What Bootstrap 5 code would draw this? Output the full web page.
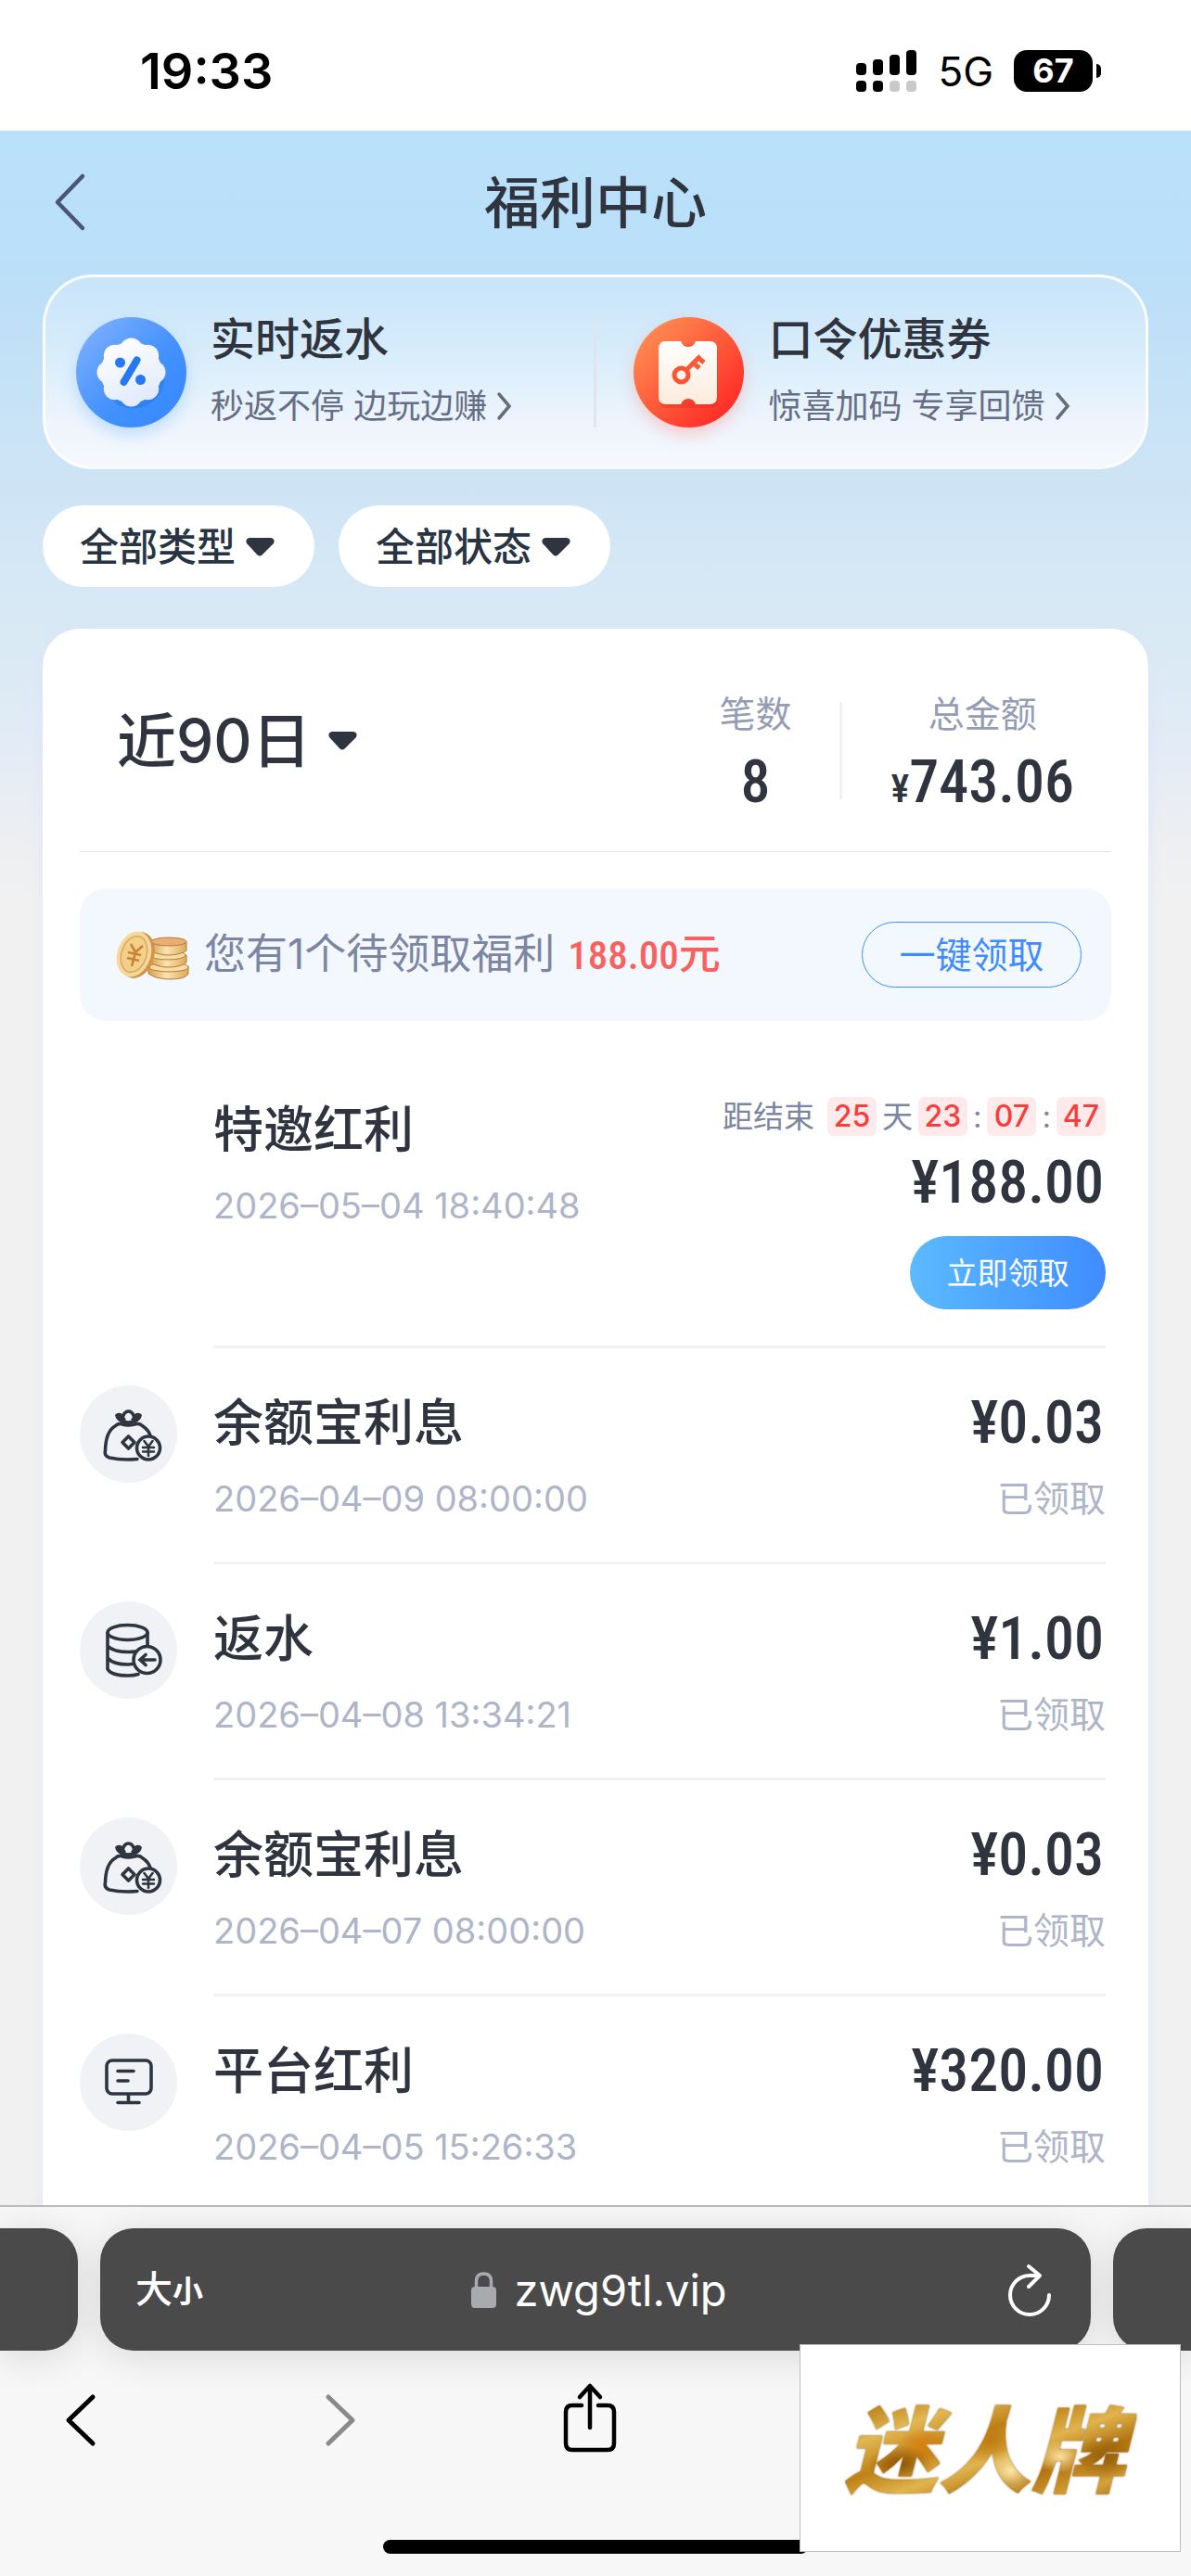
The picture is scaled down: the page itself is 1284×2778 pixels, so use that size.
<!DOCTYPE html>
<html lang="zh-CN">
<head>
<meta charset="utf-8">
<meta name="viewport" content="width=device-width, initial-scale=1">
<title>福利中心</title>
<link href="https://cdn.jsdelivr.net/npm/bootstrap@5.3.0/dist/css/bootstrap.min.css" rel="stylesheet">
<script src="https://cdn.jsdelivr.net/npm/bootstrap@5.3.0/dist/js/bootstrap.bundle.min.js"></script>
<style>
  :root { --ink: #30343f; --muted: #7c86a2; --pale: #aeb5c8; --blue: #3f8cff; }
  body { font-family: Inter, "Noto Sans CJK SC", sans-serif; color: var(--ink); background: #fff; }
  svg { display: block; flex: none; }
  select, .addr-input { appearance: none; border: 0; background: transparent; color: inherit; font: inherit; padding: 0; outline: 0; }
  .w-mid { font-weight: 500; }

  /* status bar */
  .status { height: 141px; padding: 12px 97px 0 151px; color: #000; }
  .status-time { font-size: 54px; font-weight: 600; line-height: 60px; }
  .status-net { font-size: 44px; line-height: 50px; margin: 0 22px; }
  .batt { width: 85px; height: 45px; border-radius: 14px; background: #000; color: #fff; font-size: 36px; font-weight: 700; line-height: 45px; }
  .batt-tip { width: 5px; height: 15px; border-radius: 0 5px 5px 0; background: #000; }

  /* page */
  .page { padding: 0 46px; background: #f1f1f1 linear-gradient(180deg, #b9e0fa 0, #bbdff8 150px, #cbe3f6 340px, #d4e7f5 460px, #daeaf4 560px, #e2ebf6 660px, #ebeef2 740px, #f1f1f1 830px) no-repeat; }
  .page-head { height: 155px; }
  .page-head a { left: 5px; top: 45px; }
  .page-title { font-size: 60px; line-height: 84px; font-weight: 500; margin: 0; }
  .perks { height: 210px; border: 3px solid rgba(255,255,255,.85); border-radius: 54px; background: linear-gradient(180deg, #c9e5fa 0, #d3eafa 30%, #e3f1fb 60%, #eff4fd 78%, #f5f9fd 100%); }
  .perk { gap: 26px; padding-left: 33px; color: var(--ink); }
  .perk + .perk-line + .perk { padding-left: 40px; }
  .perk-line { width: 3px; height: 119px; background: #dfe5ee; }
  .perk-title { font-size: 48px; line-height: 72px; padding-top: 2px; }
  .perk-sub { font-size: 36px; line-height: 72px; color: #666e86; gap: 10px; }
  .badge-blue { filter: drop-shadow(0 8px 8px rgba(80,170,255,.3)); }
  .badge-red { filter: drop-shadow(0 8px 8px rgba(255,90,80,.25)); }

  .filters { gap: 26px; padding: 39px 0 45px; }
  .pill { height: 88px; border-radius: 44px; background: #fff; padding: 2px 43px 0 40px; gap: 10px; font-size: 42px; line-height: 60px; color: #283441; }

  .panel { border-radius: 40px 40px 0 0; background: #fff; padding: 0 40px; box-shadow: 0 0 14px rgba(220,225,250,.7); }
  .summary { height: 241px; border-bottom: 1px solid #e2e4ee; padding: 2px 40px 0 40px; }
  .range { font-size: 64px; line-height: 84px; gap: 18px; }
  .stats { gap: 52px; padding-top: 14px; }
  .stats-line { width: 3px; height: 105px; background: #f1f1f3; margin-top: 6px; }
  .stat-label { font-size: 39px; line-height: 73px; height: 73px; color: #959db4; }
  .num { font-family: "Roboto Condensed", "Liberation Sans Narrow", "Noto Sans CJK SC", sans-serif; font-weight: 500; }
  .stat-num { font-size: 64px; line-height: 76px; height: 73px; }
  .stat-yen { font-size: 42px; line-height: 42px; }

  .notice { margin-top: 39px; height: 143px; border-radius: 28px; background: #f3f8ff; padding: 0 32px 0 38px; gap: 16px; font-size: 45px; line-height: 64px; color: var(--muted); }
  .due-red { color: #f76260; }
  .notice .num { margin-left: 14px; font-size: 43px; }
  .btn-all { height: 71px; width: 237px; border: 1px solid var(--blue); border-radius: 36px; color: var(--blue); font-size: 39px; line-height: 56px; padding: 0; }

  .recs { padding-top: 37px; }
  .rec { gap: 39px; padding-top: 40px; padding-right: 6px; }
  .rec-icon { width: 105px; height: 105px; border-radius: 50%; background: #f1f2f5; }
  .rec-blank { width: 105px; }
  .rec-body { border-bottom: 3px solid #f1f2f3; padding-bottom: 28px; }
  .rec-name { font-size: 54px; line-height: 82px; }
  .rec-date { font-size: 38px; line-height: 80px; color: var(--pale); }
  .rec-state { font-size: 39px; line-height: 80px; color: var(--pale); }
  .rec-sum { font-size: 64px; line-height: 82px; padding-right: 2px; }
  .rec-due { padding-top: 5px; padding-bottom: 11px; }
  .rec-due .rec-sum { line-height: 102px; padding-bottom: 6px; }
  .due { font-size: 33px; line-height: 42px; gap: 6px; color: var(--muted); }
  .due b { width: 53px; height: 42px; border-radius: 7px; background: #feeaea; color: #f93d3d; font-weight: 500; text-align: center; font-size: 32px; }
  .btn-get { height: 79px; width: 211px; border: 0; border-radius: 40px; background: linear-gradient(90deg, #5bbaff, #3f8cff); color: #fff; font-size: 33px; line-height: 50px; padding: 0; }

  /* browser toolbar */
  .chrome { height: 400px; flex: none; border-top: 2px solid #bcbcbe; background: #f7f7f7; color: #000; }
  .tabs-row { padding-top: 23px; gap: 24px; }
  .tab-side { width: 84px; height: 132px; background: #4a4a4a; box-shadow: 0 6px 40px rgba(0,0,0,.13); }
  .tab-l { border-radius: 0 36px 36px 0; }
  .tab-r { border-radius: 36px 0 0 36px; }
  .tab-main { height: 132px; border-radius: 36px; background: #4a4a4a; color: #fff; padding: 2px 42px 0 38px; box-shadow: 0 6px 40px rgba(0,0,0,.13); }
  .size-btn { font-size: 40px; line-height: 56px; color: #fff; padding: 0; border: 0; width: 82px; text-align: left; }
  .size-btn span { font-size: 33px; font-weight: 700; }
  .addr { gap: 20px; }
  .addr-input { width: 236px; font-size: 47px; line-height: 60px; }
  .nav-row { padding: 30px 0 0 42px; gap: 181px; }
  .nav-row .btn { border: 0; padding: 0; }
  .home-bar { width: 458px; height: 15px; border-radius: 8px; background: #000; margin-top: 84px; }
  .mark-box { right: 11px; bottom: 26px; width: 411px; height: 224px; background: #fff; border: 1px solid #bdbdbd; padding-top: 6px; }
  .mark-text { font-size: 101px; line-height: 120px; font-weight: 900; font-style: italic; color: transparent; padding-right: 12px; filter: drop-shadow(0 0 1px #8a5a14);
    background:
      radial-gradient(ellipse 34px 20px at 19% 62%, #8f5407, transparent),
      radial-gradient(ellipse 26px 18px at 27% 45%, #d67f0c, transparent),
      radial-gradient(ellipse 30px 26px at 50% 40%, #bf7b10, transparent),
      radial-gradient(ellipse 30px 24px at 57% 68%, #fbe7a6, transparent),
      radial-gradient(ellipse 26px 18px at 74% 55%, #fbe09a, transparent),
      radial-gradient(ellipse 34px 24px at 90% 56%, #94600b, transparent),
      linear-gradient(160deg, #b97c14 8%, #e2b751 24%, #bf8218 40%, #e0b44c 54%, #b27410 68%, #d5a239 84%, #96590a 98%);
    -webkit-background-clip: text; background-clip: text; }
</style>
</head>
<body class="vh-100 d-flex flex-column overflow-hidden">

<svg width="0" height="0" class="position-absolute" aria-hidden="true">
  <defs>
    <symbol id="caret" viewBox="0 0 31 20"><path d="M4 0h23q5 1 3 6L18 18q-3 3-6 0L1 6q-2-5 3-6z" fill="#2f3540"/></symbol>
    <symbol id="more" viewBox="0 0 18 32"><path d="M3 3l11 13L3 29" fill="none" stroke="#666c7a" stroke-width="3.5" stroke-linecap="round"/></symbol>
    <symbol id="bag" viewBox="0 0 105 105">
      <g fill="none" stroke="#2f3540" stroke-width="3.6" stroke-linecap="round" stroke-linejoin="round">
        <path d="M62 79.500Q45 81 32 78Q26 76 27.500 70Q28 50 38 44Q42 40 46 42Q52 44 59 42Q64 40 68 44Q74 48 76 54"/>
        <path d="M45 38Q52 42 60 38"/>
        <path d="M46 35Q48 28 52.500 28Q57 28 59 35"/>
        <path d="M52.500 55l6.500 6.500l-6.500 6.500l-6.500-6.500z"/>
        <circle cx="74" cy="67.500" r="12.500"/>
        <path d="M69.500 60l4.500 6l4.500-6M68 67h12M68 71.500h12M74 66v10" stroke-width="2.600"/>
      </g>
      <path d="M38 32q3-4 8-1l4 6-5 3q-6-2-7-8zM67 32q-3-4-8-1l-4 6 5 3q6-2 7-8z" fill="#2f3540"/>
    </symbol>
    <symbol id="stack" viewBox="0 0 105 105">
      <g fill="none" stroke="#2f3540" stroke-width="3.6" stroke-linecap="round">
        <ellipse cx="51.500" cy="33.500" rx="21.500" ry="8"/>
        <path d="M30 34V73Q34 80 52 80Q58 80 63 78.500M73 34V47M30 48Q36 54.500 52 54.500Q57 54.500 60 54M30 61Q36 68 52 68L57 67.500"/>
        <circle cx="72.500" cy="63" r="14.500"/>
        <path d="M81 63H66M71 57.500l-6 5.500l6 5.500"/>
      </g>
    </symbol>
    <symbol id="screen" viewBox="0 0 105 105">
      <g fill="none" stroke="#2f3540" stroke-width="3.6" stroke-linecap="round">
        <rect x="29" y="29" width="48" height="36" rx="6"/>
        <path d="M41 40.500H58M41 51H52M52.500 66V74M41 74.500H64"/>
      </g>
    </symbol>
    <linearGradient id="gBlue" x1="0" y1="0" x2="1" y2="1"><stop offset="0" stop-color="#86b4ff"/><stop offset=".55" stop-color="#4491ff"/><stop offset="1" stop-color="#3287ff"/></linearGradient>
    <linearGradient id="gRed" x1="0" y1="0" x2="1" y2="1"><stop offset=".1" stop-color="#ff8d54"/><stop offset=".5" stop-color="#ff5a3a"/><stop offset=".9" stop-color="#ff2926"/></linearGradient>
    <linearGradient id="gSeal" gradientUnits="userSpaceOnUse" x1="40" y1="22" x2="75" y2="96"><stop offset="0" stop-color="#fff"/><stop offset="1" stop-color="#dfe9fc"/></linearGradient>
    <linearGradient id="gTicket" x1="0" y1="0" x2="0" y2="1"><stop offset="0" stop-color="#fff"/><stop offset="1" stop-color="#fdebdc"/></linearGradient>
    <linearGradient id="gGold" x1="0" y1="0" x2="1" y2="0"><stop offset="0" stop-color="#d79f4e"/><stop offset=".45" stop-color="#fbe3b0"/><stop offset="1" stop-color="#dda95c"/></linearGradient>
  </defs>
</svg>

<header class="status d-flex align-items-center justify-content-between flex-shrink-0">
  <div class="status-time">19:33</div>
  <div class="d-flex align-items-center">
    <svg width="66" height="46" viewBox="0 0 66 46">
      <g><rect x="0" y="14" width="11" height="13" rx="4"/><rect x="18" y="10" width="11" height="17" rx="4"/><rect x="36" y="5" width="11" height="22" rx="4"/><rect x="54" y="0" width="11" height="27" rx="4"/><rect x="0" y="33" width="11" height="12" rx="4"/><rect x="18" y="33" width="11" height="12" rx="4"/></g>
      <g fill="#c9c9c9"><rect x="36" y="33" width="11" height="12" rx="4"/><rect x="54" y="33" width="11" height="12" rx="4"/></g>
    </svg>
    <span class="status-net">5G</span>
    <span class="batt text-center me-1">67</span><span class="batt-tip"></span>
  </div>
</header>

<main class="page flex-grow-1 overflow-hidden">
  <div class="page-head position-relative d-flex align-items-center justify-content-center">
    <a href="#" class="position-absolute" aria-label="返回"><svg width="46" height="64" viewBox="0 0 46 64"><path d="M38 4L11 32L38 60" fill="none" stroke="#4a5578" stroke-width="4.500" stroke-linecap="round" stroke-linejoin="round"/></svg></a>
    <h1 class="page-title">福利中心</h1>
  </div>

  <section class="perks d-flex align-items-center">
    <a href="#" class="perk d-flex align-items-center text-decoration-none w-50">
      <svg class="badge-blue" width="119" height="119" viewBox="0 0 119 119">
        <circle cx="59.500" cy="59.500" r="59.500" fill="url(#gBlue)"/>
        <g fill="#1766e6" opacity=".35" transform="translate(2 5)"><circle cx="59.500" cy="59.500" r="34"/></g>
        <g fill="url(#gSeal)"><circle cx="59.500" cy="59.500" r="33"/><circle cx="84.500" cy="59.500" r="12"/><circle cx="77.200" cy="77.200" r="12"/><circle cx="59.500" cy="84.500" r="12"/><circle cx="41.800" cy="77.200" r="12"/><circle cx="34.500" cy="59.500" r="12"/><circle cx="41.800" cy="41.800" r="12"/><circle cx="59.500" cy="34.500" r="12"/><circle cx="77.200" cy="41.800" r="12"/></g>
        <g fill="#2678f4"><circle cx="47.500" cy="49" r="5.500"/><circle cx="69.500" cy="67.500" r="5.500"/></g>
        <path d="M65.500 46.500L51.500 70" stroke="#2678f4" stroke-width="8" stroke-linecap="round"/>
      </svg>
      <div>
        <div class="perk-title w-mid">实时返水</div>
        <div class="perk-sub d-flex align-items-center">秒返不停 边玩边赚<svg width="18" height="32"><use href="#more"/></svg></div>
      </div>
    </a>
    <span class="perk-line flex-shrink-0"></span>
    <a href="#" class="perk d-flex align-items-center text-decoration-none w-50">
      <svg class="badge-red" width="119" height="119" viewBox="0 0 119 119">
        <circle cx="59.500" cy="59.500" r="59.500" fill="url(#gRed)"/>
        <path d="M36 30H83Q91 30 91 38V90Q91 98 83 98H36Q28 98 28 90V38Q28 30 36 30z" fill="#c9140f" opacity=".2"/>
        <path d="M35 26H51Q53 32 59 32Q65 32 67 26H82Q90 26 90 34V86Q90 94 82 94H67Q65 88 59 88Q53 88 51 94H35Q27 94 27 86V34Q27 26 35 26z" fill="url(#gTicket)"/>
        <circle cx="51.500" cy="62.500" r="7.500" fill="none" stroke="#fb5433" stroke-width="5"/>
        <path d="M57 57L72 42M65 50L71 55M70 44L76 49" stroke="#fb5a36" stroke-width="5" fill="none"/>
      </svg>
      <div>
        <div class="perk-title w-mid">口令优惠券</div>
        <div class="perk-sub d-flex align-items-center">惊喜加码 专享回馈<svg width="18" height="32"><use href="#more"/></svg></div>
      </div>
    </a>
  </section>

  <div class="filters d-flex">
    <label class="pill d-flex align-items-center w-mid"><select aria-label="类型"><option>全部类型</option></select><svg width="31" height="20"><use href="#caret"/></svg></label>
    <label class="pill d-flex align-items-center w-mid"><select aria-label="状态"><option>全部状态</option></select><svg width="31" height="20"><use href="#caret"/></svg></label>
  </div>

  <section class="panel">
    <div class="summary d-flex align-items-center justify-content-between">
      <label class="range d-flex align-items-center w-mid"><select aria-label="时间范围"><option>近90日</option></select><svg width="31" height="20"><use href="#caret"/></svg></label>
      <div class="stats d-flex align-items-center text-center">
        <div><div class="stat-label">笔数</div><div class="stat-num num">8</div></div>
        <span class="stats-line"></span>
        <div><div class="stat-label">总金额</div><div class="stat-num num"><span class="stat-yen">¥</span>743.06</div></div>
      </div>
    </div>

    <div class="notice d-flex align-items-center">
      <svg width="80" height="54" viewBox="0 0 80 54">
        <g stroke="#b67a35" stroke-width="1">
          <path d="M36 40v7q8 6 24 6t19-6v-8z" fill="url(#gGold)"/><ellipse cx="58" cy="40" rx="21" ry="5" fill="#f8dca6"/>
          <path d="M38 27v8q8 5 20 5t19-5v-8z" fill="url(#gGold)"/><ellipse cx="57" cy="27" rx="19" ry="5" fill="#f8dca6"/>
          <path d="M38 13v9q8 5 20 5t19-5v-9z" fill="url(#gGold)"/><ellipse cx="58" cy="12.500" rx="19" ry="4.500" fill="#e9ae73"/>
        </g>
        <ellipse cx="24" cy="27" rx="18" ry="25.500" transform="rotate(18 24 27)" fill="#cf9548"/>
        <ellipse cx="20.500" cy="26" rx="18" ry="25" transform="rotate(18 20.500 26)" fill="#f6d79c"/>
        <ellipse cx="20.500" cy="26" rx="13.500" ry="20" transform="rotate(18 20.500 26)" fill="#f3cf8c" stroke="#dba95b" stroke-width="1.500"/>
        <path d="M17 15l5 9l8-7M14 24l14 3M13 30l13 3M22 24l-4 15" stroke="#c98432" stroke-width="2.600" fill="none"/>
      </svg>
      <div class="flex-grow-1">您有1个待领取福利<span class="num due-red">188.00</span><span class="w-mid due-red">元</span></div>
      <button type="button" class="btn btn-all">一键领取</button>
    </div>

    <ul class="recs list-unstyled m-0">
      <li class="rec d-flex">
        <span class="rec-blank flex-shrink-0"></span>
        <div class="rec-body flex-grow-1 d-flex justify-content-between">
          <div><div class="rec-name w-mid">特邀红利</div><div class="rec-date">2026–05–04 18:40:48</div></div>
          <div class="rec-due d-flex flex-column align-items-end">
            <div class="due d-flex"><span class="me-2">距结束</span><b>25</b><span>天</span><b>23</b><span>:</span><b>07</b><span>:</span><b>47</b></div>
            <div class="rec-sum num">¥188.00</div>
            <button type="button" class="btn btn-get">立即领取</button>
          </div>
        </div>
      </li>
      <li class="rec d-flex">
        <svg class="rec-icon"><use href="#bag"/></svg>
        <div class="rec-body flex-grow-1 d-flex justify-content-between">
          <div><div class="rec-name w-mid">余额宝利息</div><div class="rec-date">2026–04–09 08:00:00</div></div>
          <div class="text-end"><div class="rec-sum num">¥0.03</div><div class="rec-state">已领取</div></div>
        </div>
      </li>
      <li class="rec d-flex">
        <svg class="rec-icon"><use href="#stack"/></svg>
        <div class="rec-body flex-grow-1 d-flex justify-content-between">
          <div><div class="rec-name w-mid">返水</div><div class="rec-date">2026–04–08 13:34:21</div></div>
          <div class="text-end"><div class="rec-sum num">¥1.00</div><div class="rec-state">已领取</div></div>
        </div>
      </li>
      <li class="rec d-flex">
        <svg class="rec-icon"><use href="#bag"/></svg>
        <div class="rec-body flex-grow-1 d-flex justify-content-between">
          <div><div class="rec-name w-mid">余额宝利息</div><div class="rec-date">2026–04–07 08:00:00</div></div>
          <div class="text-end"><div class="rec-sum num">¥0.03</div><div class="rec-state">已领取</div></div>
        </div>
      </li>
      <li class="rec d-flex">
        <svg class="rec-icon"><use href="#screen"/></svg>
        <div class="rec-body flex-grow-1 d-flex justify-content-between border-0">
          <div><div class="rec-name w-mid">平台红利</div><div class="rec-date">2026–04–05 15:26:33</div></div>
          <div class="text-end"><div class="rec-sum num">¥320.00</div><div class="rec-state">已领取</div></div>
        </div>
      </li>
    </ul>
  </section>
</main>

<footer class="chrome position-relative">
  <div class="tabs-row d-flex">
    <span class="tab-side tab-l flex-shrink-0"></span>
    <div class="tab-main flex-grow-1 d-flex align-items-center justify-content-between">
      <button type="button" class="btn size-btn w-mid">大<span>小</span></button>
      <label class="addr d-flex align-items-center">
        <svg width="27" height="40" viewBox="0 0 27 40"><rect y="16" width="27" height="23" rx="4" fill="#a9a9b0"/><path d="M5.500 17V10Q5.500 2 13.500 2Q21.500 2 21.500 10V17" fill="none" stroke="#a9a9b0" stroke-width="3.500"/></svg>
        <input class="addr-input" type="text" aria-label="网址" value="zwg9tl.vip">
      </label>
      <a href="#" aria-label="刷新" class="ps-3"><svg width="48" height="58" viewBox="0 0 48 58"><path d="M45 34A21 21 0 1 1 24 13H34" fill="none" stroke="#fff" stroke-width="4" stroke-linecap="round"/><path d="M23 3L35 13L23 25" fill="none" stroke="#fff" stroke-width="4" stroke-linecap="round" stroke-linejoin="round"/></svg></a>
    </div>
    <span class="tab-side tab-r flex-shrink-0"></span>
  </div>
  <nav class="nav-row d-flex">
    <button type="button" class="btn" aria-label="后退"><svg width="92" height="90" viewBox="0 0 92 90"><path d="M58 20L32 45L58 70" fill="none" stroke="#000" stroke-width="5" stroke-linecap="round" stroke-linejoin="round"/></svg></button>
    <button type="button" class="btn" aria-label="前进"><svg width="92" height="90" viewBox="0 0 92 90"><path d="M39 20L65 45L39 70" fill="none" stroke="#8a8a8a" stroke-width="5" stroke-linecap="round" stroke-linejoin="round"/></svg></button>
    <button type="button" class="btn" aria-label="分享"><svg width="92" height="90" viewBox="0 0 92 90"><path d="M39 29H29Q22 29 22 36V70Q22 77 29 77H67Q74 77 74 70V36Q74 29 67 29H57M48 53V9M37 20L48 8L59 20" fill="none" stroke="#000" stroke-width="4.500" stroke-linecap="round" stroke-linejoin="round"/></svg></button>
  </nav>
  <div class="home-bar mx-auto"></div>
  <div class="mark-box position-absolute d-flex align-items-center justify-content-center"><span class="mark-text">迷人牌</span></div>
</footer>
</body>
</html>
